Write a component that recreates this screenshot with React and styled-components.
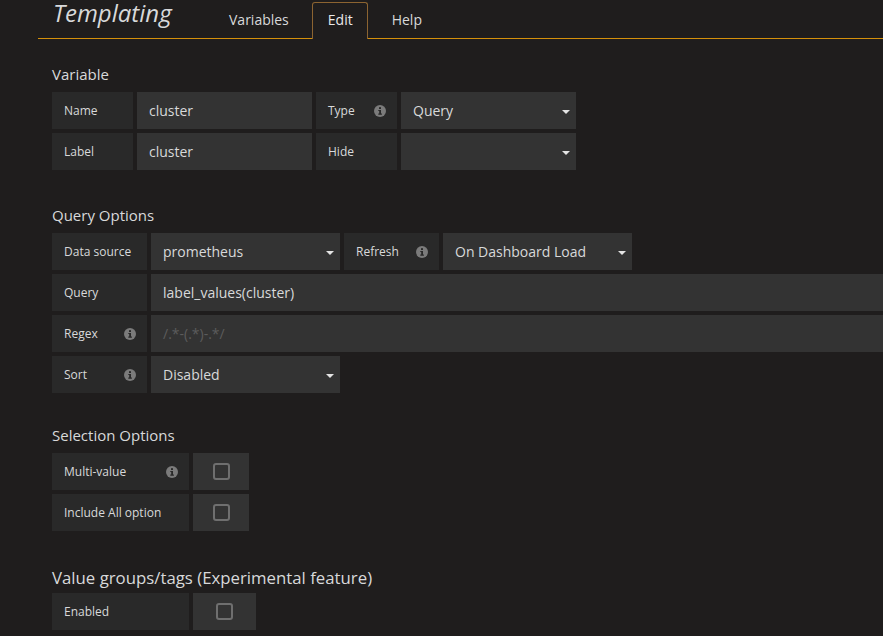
import React from 'react';
import styled, { createGlobalStyle } from 'styled-components';

const GlobalStyle = createGlobalStyle`
  html, body {
    margin: 0;
    padding: 0;
    background: #1f1d1d;
    overflow: hidden;
  }
  body {
    font-family: "Open Sans", "Liberation Sans", sans-serif;
    color: #d8d9da;
  }
`;

const Page = styled.div`
  width: 883px;
  height: 636px;
  background: #1f1d1d;
`;

const Header = styled.div`
  margin-left: 38px;
  height: 38px;
  display: flex;
  align-items: flex-end;
  border-bottom: 1px solid #d4900b;
`;

const Title = styled.div`
  align-self: flex-start;
  width: 160px;
  padding-left: 15px;
  font-size: 24px;
  line-height: 26px;
  font-style: italic;
  color: #d8d9da;
`;

const Tab = styled.div`
  height: 37px;
  box-sizing: border-box;
  margin-right: 8px;
  margin-bottom: -1px;
  padding: 0 14px 2px 15px;
  display: flex;
  align-items: center;
  font-size: 14px;
  line-height: 20px;
  color: ${(p) => (p.active ? '#e9e9e9' : '#d8d9da')};
  background: ${(p) => (p.active ? '#1f1d1d' : 'transparent')};
  border: 1px solid ${(p) => (p.active ? '#8c6431' : 'transparent')};
  border-bottom: 0;
  border-radius: 3px 3px 0 0;
`;

const Content = styled.div`
  padding: 25px 0 0 52px;
`;

const Group = styled.div`
  margin-bottom: ${(p) => p.spacing || 33}px;
`;

const Heading = styled.h5`
  margin: 0 0 ${(p) => (p.large ? 5 : 8)}px;
  font-size: ${(p) => (p.large ? 16.8 : 15)}px;
  line-height: 20px;
  font-weight: normal;
  color: #d8d9da;
`;

const Rows = styled.div`
  display: flex;
  flex-direction: column;
  gap: 4px;
`;

const Row = styled.div`
  display: flex;
  gap: 4px;
`;

const Label = styled.div`
  width: ${(p) => p.width}px;
  height: 37px;
  box-sizing: border-box;
  padding: 0 11px 0 12px;
  display: flex;
  align-items: center;
  justify-content: space-between;
  background: #292929;
  font-size: 12px;
  color: #d8d9da;
  white-space: nowrap;
`;

const Field = styled.div`
  ${(p) => (p.width ? `width: ${p.width}px;` : 'flex: 1;')}
  height: 37px;
  box-sizing: border-box;
  padding: 0 6px 0 12px;
  display: flex;
  align-items: center;
  justify-content: space-between;
  background: #333333;
  font-size: 14px;
  color: ${(p) => (p.placeholder ? '#5c5c5c' : '#d8d9da')};
  white-space: nowrap;
`;

const Caret = styled.span`
  width: 0;
  height: 0;
  margin-top: 2px;
  border-left: 4px solid transparent;
  border-right: 4px solid transparent;
  border-top: 4px solid #e4e4e4;
`;

const CheckCell = styled.div`
  width: ${(p) => p.width}px;
  height: 37px;
  display: flex;
  align-items: center;
  justify-content: center;
  background: #333333;
`;

const CheckBox = styled.span`
  width: 17px;
  height: 17px;
  box-sizing: border-box;
  border: 2px solid #6f6f6f;
  border-radius: 3px;
`;

const InfoIcon = () => (
  <svg width="12" height="12" viewBox="0 0 12 12">
    <circle cx="6" cy="6" r="6" fill="#7b7b7b" />
    <rect x="5" y="2.2" width="2" height="1.8" fill="#292929" />
    <path d="M4.3 5h2.7v3.6h0.9v1.1H4.3V8.6h0.9V6.1H4.3z" fill="#292929" />
  </svg>
);

const FormLabel = ({ width, info, children }) => (
  <Label width={width}>
    <span>{children}</span>
    {info && <InfoIcon />}
  </Label>
);

const Select = ({ width, children }) => (
  <Field width={width}>
    <span>{children}</span>
    <Caret />
  </Field>
);

const Checkbox = ({ width }) => (
  <CheckCell width={width}>
    <CheckBox />
  </CheckCell>
);

export default function App() {
  return (
    <Page>
      <GlobalStyle />
      <Header>
        <Title>Templating</Title>
        <Tab>Variables</Tab>
        <Tab active>Edit</Tab>
        <Tab>Help</Tab>
      </Header>
      <Content>
        <Group spacing={35}>
          <Heading>Variable</Heading>
          <Rows>
            <Row>
              <FormLabel width={81}>Name</FormLabel>
              <Field width={175}>cluster</Field>
              <FormLabel width={81} info>Type</FormLabel>
              <Select width={175}>Query</Select>
            </Row>
            <Row>
              <FormLabel width={81}>Label</FormLabel>
              <Field width={175}>cluster</Field>
              <FormLabel width={81}>Hide</FormLabel>
              <Select width={175}></Select>
            </Row>
          </Rows>
        </Group>

        <Group spacing={32}>
          <Heading>Query Options</Heading>
          <Rows>
            <Row>
              <FormLabel width={95}>Data source</FormLabel>
              <Select width={189}>prometheus</Select>
              <FormLabel width={95} info>Refresh</FormLabel>
              <Select width={189}>On Dashboard Load</Select>
            </Row>
            <Row>
              <FormLabel width={95}>Query</FormLabel>
              <Field>label_values(cluster)</Field>
            </Row>
            <Row>
              <FormLabel width={95} info>Regex</FormLabel>
              <Field placeholder>/.*-(.*)-.*/</Field>
            </Row>
            <Row>
              <FormLabel width={95} info>Sort</FormLabel>
              <Select width={189}>Disabled</Select>
            </Row>
          </Rows>
        </Group>

        <Group spacing={37}>
          <Heading>Selection Options</Heading>
          <Rows>
            <Row>
              <FormLabel width={137} info>Multi-value</FormLabel>
              <Checkbox width={56} />
            </Row>
            <Row>
              <FormLabel width={137}>Include All option</FormLabel>
              <Checkbox width={56} />
            </Row>
          </Rows>
        </Group>

        <Group>
          <Heading large>Value groups/tags (Experimental feature)</Heading>
          <Rows>
            <Row>
              <FormLabel width={137}>Enabled</FormLabel>
              <Checkbox width={63} />
            </Row>
          </Rows>
        </Group>
      </Content>
    </Page>
  );
}
